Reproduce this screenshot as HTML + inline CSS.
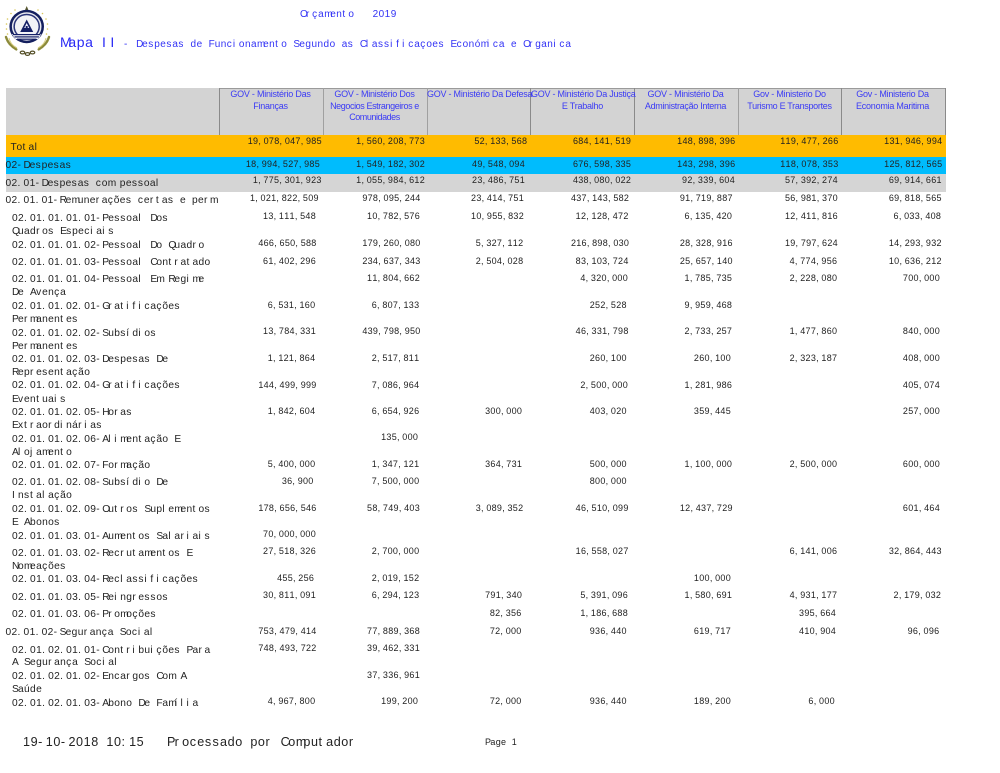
<!DOCTYPE html>
<html lang="pt"><head><meta charset="utf-8"><title>Mapa II</title>
<style>
html,body{margin:0;padding:0;background:#fff}
body{position:relative;width:1000px;height:773px;overflow:hidden;font-family:"Liberation Sans",sans-serif;color:#222}
.bg{position:absolute}
.vl{position:absolute;top:88px;height:47px;width:1px;background:#8a8a8a}
.h{position:absolute;top:89px;height:46px;width:103px;text-align:center;font-size:9px;line-height:11.6px;color:#3a3af5;letter-spacing:-.24px;white-space:nowrap}
.h span{display:block}
.l,.m,.f,.t,.d,.g{position:absolute;white-space:pre}
.l{font-size:10.2px;line-height:12px;height:12px;letter-spacing:.5px;margin-top:1px}
.t{font-size:10px;line-height:12px;color:#3232f5}
.m{font-size:14px;line-height:16px;color:#2a2af5;left:60px;top:34px}
.d{font-size:10px;line-height:12px;color:#3232f5;left:124px;top:38.5px}
.f{font-size:12.6px;line-height:16px;left:23px;top:734px}
.g{font-size:9px;line-height:12px;left:485px;top:736px}
p.v{position:absolute;left:0;width:1000px;height:12px;margin:0}
u{position:absolute;top:0;text-decoration:none;font-size:9px;line-height:12px;white-space:pre;text-align:right}
u:nth-child(1){right:690px}u:nth-child(2){right:586px}u:nth-child(3){right:482px}u:nth-child(4){right:377.4px}u:nth-child(5){right:273.2px}u:nth-child(6){right:168.1px}u:nth-child(7){right:64.2px}
i{font-style:normal;display:inline-block;white-space:pre;vertical-align:top;text-align:left}
</style></head><body>

<svg style="position:absolute;left:0;top:0" width="56" height="60" viewBox="0 0 56 60">
<path d="M26.700 6l1.500 3.500v2.500h-3v-2.500z" fill="#5a5a30"/>
<g fill="#d9c65a"><circle cx="7.500" cy="19" r=".8"/><circle cx="6.500" cy="24" r=".8"/><circle cx="6.500" cy="29" r=".8"/><circle cx="7.500" cy="34" r=".8"/><circle cx="11" cy="13.500" r=".8"/><circle cx="15" cy="10" r=".8"/><circle cx="38" cy="10" r=".8"/><circle cx="42.500" cy="13.500" r=".8"/><circle cx="46" cy="19" r=".8"/><circle cx="47.500" cy="24" r=".8"/><circle cx="47.500" cy="29" r=".8"/><circle cx="46.500" cy="34" r=".8"/></g>
<ellipse cx="26.700" cy="26.500" rx="17.300" ry="16.700" fill="#141f5e"/>
<ellipse cx="26.700" cy="26.500" rx="14.800" ry="14.200" fill="#e8e8ee"/>
<ellipse cx="26.700" cy="26.500" rx="13.300" ry="12.800" fill="#2a3478"/>
<ellipse cx="26.700" cy="26.500" rx="11.800" ry="11.300" fill="#f2f2f6"/>
<path d="M26.700 19.500l6.500 12.500h-13z" fill="#141f66"/>
<path d="M26.700 23l2.500 5h-5z" fill="#eef"/><rect x="25.700" y="26" width="2" height="5" fill="#141f66"/>
<path d="M12 34h29.400c-1 2-2 3.500-3.500 5h-22.400c-1.500-1.500-2.500-3-3.500-5z" fill="#f4f4f8"/>
<rect x="13" y="34" width="27.400" height="1.200" fill="#141f66"/><rect x="14.500" y="36.300" width="24.400" height="1.200" fill="#141f66"/><rect x="17" y="38.600" width="19.400" height="1.200" fill="#141f66"/>
<g fill="none" stroke="#8c8a3a" stroke-width="2.400" stroke-linecap="round"><path d="M6 37c2 6 5 9 10.500 12.500" stroke-dasharray="2.500 1"/><path d="M49 37c-2 6-5 9-10.500 12.500" stroke-dasharray="2.500 1"/></g>
<g fill="none" stroke="#d8cf80" stroke-width="1"><path d="M9 38c1 5 4 8 8 10"/><path d="M46 38c-1 5-4 8-8 10"/></g>
<g fill="none" stroke="#555028" stroke-width="1.300"><ellipse cx="22.500" cy="52.500" rx="2.200" ry="1.400"/><ellipse cx="27.500" cy="54" rx="2.200" ry="1.400"/><ellipse cx="32.500" cy="52.500" rx="2.200" ry="1.400"/></g>
</svg>

<div class="t" style="left:300px;top:8.500px">Orçamento   2019</div>
<div class="m">Mapa II</div>
<div class="d">- Despesas de Funcionamento Segundo as Classificaçoes Económica e Organica</div>

<div class="bg" style="left:6px;top:88px;width:940px;height:47px;background:#d3d3d3"></div>
<div class="bg" style="left:219px;top:88px;width:727px;height:1px;background:#9a9a9a"></div>
<div class="bg" style="left:6px;top:135px;width:940px;height:22px;background:#ffbb00"></div>
<div class="bg" style="left:6px;top:157px;width:940px;height:17px;background:#00bcfd"></div>
<div class="bg" style="left:6px;top:174px;width:940px;height:18px;background:#d5d5d5"></div>

<div class="vl" style="left:219px"></div><div class="vl" style="left:323px;background:#a0a0a0"></div><div class="vl" style="left:427px;background:#a0a0a0"></div><div class="vl" style="left:530px"></div><div class="vl" style="left:634px"></div><div class="vl" style="left:738px;background:#a0a0a0"></div><div class="vl" style="left:841px"></div><div class="vl" style="left:945px"></div>

<div class="h" style="left:219px"><span>GOV - Ministério Das</span><span>Finanças</span></div>
<div class="h" style="left:323px"><span>GOV - Ministério Dos</span><span style="letter-spacing:-.4px">Negocios Estrangeiros e</span><span style="letter-spacing:-.45px">Comunidades</span></div>
<div class="h" style="left:427px"><span>GOV - Ministério Da Defesa</span></div>
<div class="h" style="left:531px"><span>GOV - Ministério Da Justiça</span><span>E Trabalho</span></div>
<div class="h" style="left:634px"><span>GOV - Ministério Da</span><span style="letter-spacing:-.3px">Administração Interna</span></div>
<div class="h" style="left:738px"><span>Gov - Ministerio Do</span><span style="letter-spacing:-.3px">Turismo E Transportes</span></div>
<div class="h" style="left:841px"><span>Gov - Ministerio Da</span><span>Economia Maritima</span></div>

<div class="l" style="left:10.500px;top:140.500px">Total</div>
<div class="l" style="left:5.500px;top:159px">02-Despesas</div>
<div class="l" style="left:5.500px;top:176.500px">02.01-Despesas com pessoal</div>
<div class="l" style="left:5.500px;top:193.500px">02.01.01-Remunerações certas e perm</div>
<div class="l" style="left:12px;top:212px">02.01.01.01.01-Pessoal Dos</div>
<div class="l" style="left:12px;top:225px">Quadros Especiais</div>
<div class="l" style="left:12px;top:238.500px">02.01.01.01.02-Pessoal Do Quadro</div>
<div class="l" style="left:12px;top:256px">02.01.01.01.03-Pessoal Contratado</div>
<div class="l" style="left:12px;top:273px">02.01.01.01.04-Pessoal Em Regime</div>
<div class="l" style="left:12px;top:286px">De Avença</div>
<div class="l" style="left:12px;top:300px">02.01.01.02.01-Gratificações</div>
<div class="l" style="left:12px;top:313px">Permanentes</div>
<div class="l" style="left:12px;top:326.500px">02.01.01.02.02-Subsídios</div>
<div class="l" style="left:12px;top:339.500px">Permanentes</div>
<div class="l" style="left:12px;top:353px">02.01.01.02.03-Despesas De</div>
<div class="l" style="left:12px;top:366px">Representação</div>
<div class="l" style="left:12px;top:379px">02.01.01.02.04-Gratificações</div>
<div class="l" style="left:12px;top:392.500px">Eventuais</div>
<div class="l" style="left:12px;top:406px">02.01.01.02.05-Horas</div>
<div class="l" style="left:12px;top:419px">Extraordinárias</div>
<div class="l" style="left:12px;top:432.500px">02.01.01.02.06-Alimentação E</div>
<div class="l" style="left:12px;top:446px">Alojamento</div>
<div class="l" style="left:12px;top:459px">02.01.01.02.07-Formação</div>
<div class="l" style="left:12px;top:476px">02.01.01.02.08-Subsídio De</div>
<div class="l" style="left:12px;top:489px">Instalação</div>
<div class="l" style="left:12px;top:503px">02.01.01.02.09-Outros Suplementos</div>
<div class="l" style="left:12px;top:516px">E Abonos</div>
<div class="l" style="left:12px;top:529.500px">02.01.01.03.01-Aumentos Salariais</div>
<div class="l" style="left:12px;top:546.500px">02.01.01.03.02-Recrutamentos E</div>
<div class="l" style="left:12px;top:560px">Nomeações</div>
<div class="l" style="left:12px;top:573px">02.01.01.03.04-Reclassificações</div>
<div class="l" style="left:12px;top:591px">02.01.01.03.05-Reingressos</div>
<div class="l" style="left:12px;top:608px">02.01.01.03.06-Promoções</div>
<div class="l" style="left:5.500px;top:626px">02.01.02-Segurança Social</div>
<div class="l" style="left:12px;top:643.500px">02.01.02.01.01-Contribuições Para</div>
<div class="l" style="left:12px;top:656px">A Segurança Social</div>
<div class="l" style="left:12px;top:670px">02.01.02.01.02-Encargos Com A</div>
<div class="l" style="left:12px;top:683px">Saúde</div>
<div class="l" style="left:12px;top:697px">02.01.02.01.03-Abono De Família</div>

<p class="v" style="top:134.700px"><u>19,078,047,985</u><u>1,560,208,773</u><u>52,133,568</u><u>684,141,519</u><u>148,898,396</u><u>119,477,266</u><u>131,946,994</u></p>
<p class="v" style="top:157.500px"><u>18,994,527,985</u><u>1,549,182,302</u><u>49,548,094</u><u>676,598,335</u><u>143,298,396</u><u>118,078,353</u><u>125,812,565</u></p>
<p class="v" style="top:174px"><u>1,775,301,923</u><u>1,055,984,612</u><u>23,486,751</u><u>438,080,022</u><u>92,339,604</u><u>57,392,274</u><u>69,914,661</u></p>
<p class="v" style="top:192px"><u>1,021,822,509</u><u>978,095,244</u><u>23,414,751</u><u>437,143,582</u><u>91,719,887</u><u>56,981,370</u><u>69,818,565</u></p>
<p class="v" style="top:210px"><u>13,111,548</u><u>10,782,576</u><u>10,955,832</u><u>12,128,472</u><u>6,135,420</u><u>12,411,816</u><u>6,033,408</u></p>
<p class="v" style="top:237px"><u>466,650,588</u><u>179,260,080</u><u>5,327,112</u><u>216,898,030</u><u>28,328,916</u><u>19,797,624</u><u>14,293,932</u></p>
<p class="v" style="top:254.500px"><u>61,402,296</u><u>234,637,343</u><u>2,504,028</u><u>83,103,724</u><u>25,657,140</u><u>4,774,956</u><u>10,636,212</u></p>
<p class="v" style="top:272px"><u></u><u>11,804,662</u><u></u><u>4,320,000</u><u>1,785,735</u><u>2,228,080</u><u>700,000</u></p>
<p class="v" style="top:298.500px"><u>6,531,160</u><u>6,807,133</u><u></u><u>252,528</u><u>9,959,468</u><u></u><u></u></p>
<p class="v" style="top:325px"><u>13,784,331</u><u>439,798,950</u><u></u><u>46,331,798</u><u>2,733,257</u><u>1,477,860</u><u>840,000</u></p>
<p class="v" style="top:352px"><u>1,121,864</u><u>2,517,811</u><u></u><u>260,100</u><u>260,100</u><u>2,323,187</u><u>408,000</u></p>
<p class="v" style="top:378.500px"><u>144,499,999</u><u>7,086,964</u><u></u><u>2,500,000</u><u>1,281,986</u><u></u><u>405,074</u></p>
<p class="v" style="top:405px"><u>1,842,604</u><u>6,654,926</u><u>300,000</u><u>403,020</u><u>359,445</u><u></u><u>257,000</u></p>
<p class="v" style="top:431px"><u></u><u>135,000</u></p>
<p class="v" style="top:457.500px"><u>5,400,000</u><u>1,347,121</u><u>364,731</u><u>500,000</u><u>1,100,000</u><u>2,500,000</u><u>600,000</u></p>
<p class="v" style="top:475px"><u>36,900</u><u>7,500,000</u><u></u><u>800,000</u></p>
<p class="v" style="top:502px"><u>178,656,546</u><u>58,749,403</u><u>3,089,352</u><u>46,510,099</u><u>12,437,729</u><u></u><u>601,464</u></p>
<p class="v" style="top:528px"><u>70,000,000</u></p>
<p class="v" style="top:545px"><u>27,518,326</u><u>2,700,000</u><u></u><u>16,558,027</u><u></u><u>6,141,006</u><u>32,864,443</u></p>
<p class="v" style="top:572px"><u>455,256</u><u>2,019,152</u><u></u><u></u><u>100,000</u></p>
<p class="v" style="top:589px"><u>30,811,091</u><u>6,294,123</u><u>791,340</u><u>5,391,096</u><u>1,580,691</u><u>4,931,177</u><u>2,179,032</u></p>
<p class="v" style="top:607px"><u></u><u></u><u>82,356</u><u>1,186,688</u><u></u><u>395,664</u></p>
<p class="v" style="top:625px"><u>753,479,414</u><u>77,889,368</u><u>72,000</u><u>936,440</u><u>619,717</u><u>410,904</u><u>96,096</u></p>
<p class="v" style="top:642px"><u>748,493,722</u><u>39,462,331</u></p>
<p class="v" style="top:669px"><u></u><u>37,336,961</u></p>
<p class="v" style="top:695px"><u>4,967,800</u><u>199,200</u><u>72,000</u><u>936,440</u><u>189,200</u><u>6,000</u></p>

<div class="f">19-10-2018 10:15   Processado por Computador</div>
<div class="g">Page 1</div>

<script>
(function(){
function wrap(e,w){
  var s=e.textContent,h=document.createDocumentFragment();
  e.textContent='';
  e.style.letterSpacing='0';
  for(var k=0;k<s.length;k++){var c=document.createElement('i');c.textContent=s.charAt(k);c.style.width=w+'px';h.appendChild(c);}
  e.appendChild(h);
}
var map={l:6.03,t:6.05,d:6.05,m:8.4,f:7.58,g:5.35};
for(var cl in map){var a=document.querySelectorAll('.'+cl);for(var j=0;j<a.length;j++)wrap(a[j],map[cl]);}
var off=[[3.5,3.2,3.3,2,2,0,0],[1.6,3.2,1,2,2,0,0],[3.9,3.2,1,2,2.2,0,0],[1,0,0,0,0,0,0]];
var rows=document.querySelectorAll('p.v');
for(var r=0;r<rows.length;r++){
  var us=rows[r].querySelectorAll('u');
  for(var q=0;q<us.length;q++){
    var n=us[q].textContent.length;if(!n)continue;
    var o=(r<4?off[r][q]:0);
    wrap(us[q],5.3);
    us[q].style.marginRight=(-(0.6*n+o))+'px';
  }
}
})();
</script>
</body></html>
